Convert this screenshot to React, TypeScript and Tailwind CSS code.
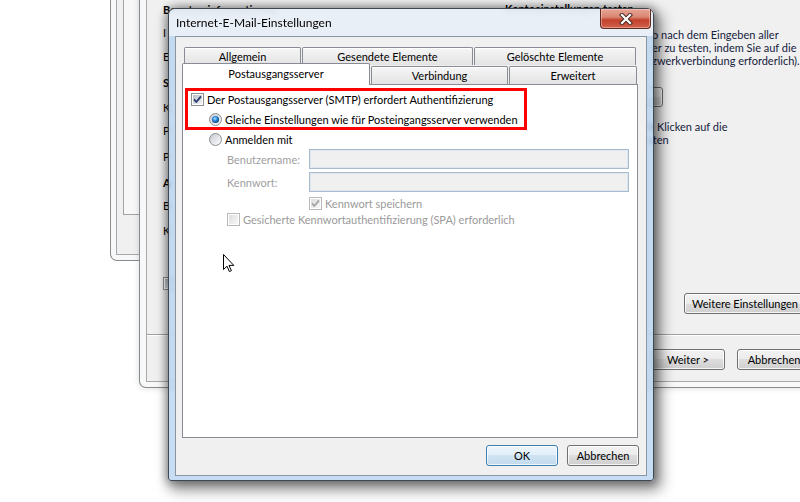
import React from "react";

type BtnProps = { children?: React.ReactNode; className?: string; primary?: boolean };

function Btn({ children, className = "", primary = false }: BtnProps) {
  const skin = primary
    ? "border-[#3c7fb1] bg-[linear-gradient(#edf5fb_0%,#e1eef8_50%,#cfe3f2_50%,#c3dbee_100%)] shadow-[inset_0_0_0_1px_rgba(255,255,255,0.7)]"
    : "border-[#707070] bg-[linear-gradient(#f2f2f2_0%,#ebebeb_50%,#dddddd_50%,#cfcfcf_100%)] shadow-[inset_0_0_0_1px_rgba(255,255,255,0.8)]";
  return (
    <div className={`flex shrink-0 items-center justify-center overflow-hidden whitespace-nowrap rounded-[3px] border ${skin} ${className}`}>
      {children}
    </div>
  );
}

function Check({ checked = false, disabled = false }: { checked?: boolean; disabled?: boolean }) {
  return (
    <svg width="13" height="13" viewBox="0 0 13 13" className="shrink-0">
      <defs>
        <linearGradient id="chkOn" x1="0" y1="0" x2="1" y2="1">
          <stop offset="0" stopColor="#b8bec6" />
          <stop offset="1" stopColor="#f2f3f4" />
        </linearGradient>
        <linearGradient id="chkOff" x1="0" y1="0" x2="1" y2="1">
          <stop offset="0" stopColor="#dcdcdc" />
          <stop offset="1" stopColor="#f7f7f7" />
        </linearGradient>
      </defs>
      <rect x="0.5" y="0.5" width="12" height="12" fill="#fff" stroke={disabled ? "#b9b9b9" : "#8e8f8f"} />
      <rect x="2" y="2" width="9" height="9" fill={disabled ? "url(#chkOff)" : "url(#chkOn)"} />
      {checked && (
        <path
          d="M3 6.3 L5.3 9 L10 3.3"
          fill="none"
          stroke={disabled ? "#a6a6a6" : "#2c3d72"}
          strokeWidth="1.9"
          strokeLinejoin="round"
        />
      )}
    </svg>
  );
}

function Radio({ checked = false }: { checked?: boolean }) {
  return (
    <svg width="13" height="13" viewBox="0 0 13 13" className="shrink-0">
      <defs>
        <linearGradient id="radBg" x1="0" y1="0" x2="1" y2="1">
          <stop offset="0" stopColor="#c4c9cf" />
          <stop offset="1" stopColor="#ffffff" />
        </linearGradient>
        <radialGradient id="radDot" cx="0.42" cy="0.38" r="0.65">
          <stop offset="0" stopColor="#b5e2ff" />
          <stop offset="0.45" stopColor="#2d8ee0" />
          <stop offset="1" stopColor="#0c3a70" />
        </radialGradient>
      </defs>
      <circle cx="6.5" cy="6.5" r="6" fill="url(#radBg)" stroke="#8e8f8f" />
      {checked && <circle cx="6.5" cy="6.5" r="3.6" fill="url(#radDot)" />}
    </svg>
  );
}

function Field() {
  return (
    <div className="h-[20px] w-[320px] shrink-0 border border-[#a9bbd0] bg-[#f0f0f0] shadow-[inset_0_0_0_1px_#dfe6ee]" />
  );
}

function OldWindow() {
  return (
    <div className="absolute left-[110px] top-[-30px] flex h-[291px] w-[90px] flex-col rounded-b-[7px] border border-t-0 border-[#8a8a8a] bg-[#f6f8fa] px-[5px] pb-[5px]">
      <div className="flex-1 border border-t-0 border-[#a9a9a9] bg-[#f0f0f0] pl-[6px]">
        <div className="h-[245px] border border-t-0 border-[#a3a3a3] bg-[#f7f7f7]" />
      </div>
    </div>
  );
}

// the dialog hides these labels, only their first letter peeks out
const accountLabels = [
  { text: "I", mt: "mt-[11px]" },
  { text: "E", mt: "mt-[10px]" },
  { text: "S", bold: true, mt: "mt-[12px]" },
  { text: "K", mt: "mt-[11px]" },
  { text: "P", mt: "mt-[9px]" },
  { text: "P", mt: "mt-[12px]" },
  { text: "A", bold: true, mt: "mt-[12px]" },
  { text: "B", mt: "mt-[9px]" },
  { text: "K", mt: "mt-[11px]" },
];

function AccountWindow() {
  return (
    <div className="absolute left-[139px] top-[-40px] flex h-[428px] w-[720px] flex-col rounded-b-[7px] border border-t-0 border-[#8a8a8a] bg-[#f6f8fa] px-[6px] pb-[5px] shadow-[0_0_6px_rgba(0,0,0,0.15)]">
      <div className="flex flex-1 flex-col border border-t-0 border-[#a9a9a9] bg-[#f0f0f0]">
        <div className="flex h-[374px]">
          <div className="flex w-[358px] shrink-0 flex-col pl-[16px] pt-[44px]">
            <div className="h-[11px] whitespace-nowrap font-bold leading-[11px]">Benutzerinformationen</div>
            {accountLabels.map((l, i) => (
              <div key={i} className={`h-[14px] leading-[14px] ${l.mt} ${l.bold ? "font-bold" : ""}`}>
                {l.text}
              </div>
            ))}
            <div className="mt-[39px] flex">
              <Check />
            </div>
          </div>
          <div className="flex flex-1 flex-col pt-[43px]">
            <div className="h-[11px] whitespace-nowrap font-bold leading-[11px]">Kontoeinstellungen testen</div>
            <div className="ml-[147px] mt-[14px] whitespace-nowrap leading-[13px] text-[#14213d]">
              <div>o nach dem Eingeben aller</div>
              <div>er zu testen, indem Sie auf die</div>
              <div>zwerkverbindung erforderlich).</div>
            </div>
            <Btn className="mt-[20px] h-[20px] w-[158px]" />
            <div className="ml-[143px] mt-[13px] whitespace-nowrap leading-[13px] text-[#14213d]">
              <div>h Klicken auf die</div>
              <div>sten</div>
            </div>
            <Btn className="mb-[20px] ml-[179px] mt-auto h-[21px] w-[132px] !justify-start pl-[7px]">
              Weitere Einstellungen
            </Btn>
          </div>
        </div>
        <div className="border-t border-b border-t-[#a0a0a0] border-b-white" />
        <div className="flex flex-1 gap-[8px] pl-[422px] pt-[13px]">
          <Btn className="h-[21px] w-[74px]" />
          <Btn className="h-[21px] w-[74px]">Weiter &gt;</Btn>
          <Btn className="ml-[4px] h-[21px] w-[74px]">Abbrechen</Btn>
        </div>
      </div>
    </div>
  );
}

function CloseButton() {
  return (
    <div className="-mt-[1px] mr-[2px] flex h-[20px] w-[51px] items-center justify-center self-start rounded-b-[4px] border border-t-0 border-[#5e2a22] bg-[linear-gradient(#e6a595_0%,#d98773_42%,#c2412c_58%,#d0614c_100%)] shadow-[inset_0_0_0_1px_rgba(255,220,210,0.45)]">
      <svg width="14" height="12" viewBox="0 0 14 12">
        <path d="M3 2 L11 10 M11 2 L3 10" stroke="#4a2a26" strokeWidth="4.2" strokeLinecap="square" />
        <path d="M3 2 L11 10 M11 2 L3 10" stroke="#ffffff" strokeWidth="2.2" strokeLinecap="square" />
      </svg>
    </div>
  );
}

function Tab({ label, className = "", active = false }: { label: string; className?: string; active?: boolean }) {
  return (
    <div
      className={`flex shrink-0 items-center justify-center rounded-t-[2px] border border-b-0 border-[#898c95] ${
        active
          ? "relative z-10 -mb-[1px] h-[22px] bg-white pb-[2px]"
          : "h-[18px] bg-[linear-gradient(#f6f6f6,#e3e3e3)] shadow-[inset_0_1px_0_#ffffff]"
      } ${className}`}
    >
      {label}
    </div>
  );
}

function MailSettingsDialog() {
  return (
    <div className="absolute left-[168px] top-[8px] flex h-[473px] w-[486px] flex-col rounded-t-[7px] rounded-b-[3px] border border-[#3f4852] bg-[#b4d1ef]/75 px-[6px] pb-[4px] shadow-[0_0_8px_2px_rgba(0,0,0,0.3),4px_6px_14px_3px_rgba(0,0,0,0.45)] backdrop-blur-[2px]">
      <div className="-mx-[6px] flex h-[27px] items-center rounded-t-[6px] bg-[#f1f4f7]/80 pl-[7px] pt-[1px] text-[12px]">
        <span className="flex-1">Internet-E-Mail-Einstellungen</span>
        <CloseButton />
      </div>
      <div className="flex flex-1 flex-col border border-[#8a95a3] bg-[#f0f0f0]">
        <div className="mt-[10px] flex h-[18px] gap-[1px] pl-[8px]">
          <Tab label="Allgemein" className="w-[117px]" />
          <Tab label="Gesendete Elemente" className="w-[171px]" />
          <Tab label="Gelöschte Elemente" className="w-[162px]" />
        </div>
        <div className="-mt-[2px] flex h-[21px] items-end gap-[1px] pl-[6px]">
          <Tab label="Postausgangsserver" active className="w-[188px]" />
          <Tab label="Verbindung" className="w-[137px]" />
          <Tab label="Erweitert" className="w-[128px]" />
        </div>
        <div className="relative ml-[6px] flex h-[354px] w-[456px] flex-col border border-[#898c95] bg-white">
          <div className="ml-[8px] mt-[8px] flex h-[13px] items-center gap-[3px]">
            <Check checked />
            <span>Der Postausgangsserver (SMTP) erfordert Authentifizierung</span>
          </div>
          <div className="ml-[26px] mt-[7px] flex h-[13px] items-center gap-[3px]">
            <Radio checked />
            <span>Gleiche Einstellungen wie für Posteingangsserver verwenden</span>
          </div>
          <div className="ml-[26px] mt-[7px] flex h-[13px] items-center gap-[3px]">
            <Radio />
            <span>Anmelden mit</span>
          </div>
          <div className="ml-[44px] mt-[3px] flex items-center text-[#a0a0a0]">
            <span className="w-[82px] shrink-0">Benutzername:</span>
            <Field />
          </div>
          <div className="ml-[44px] mt-[3px] flex items-center text-[#a0a0a0]">
            <span className="w-[82px] shrink-0">Kennwort:</span>
            <Field />
          </div>
          <div className="ml-[126px] mt-[5px] flex h-[13px] items-center gap-[3px] text-[#9a9a9a]">
            <Check checked disabled />
            <span>Kennwort speichern</span>
          </div>
          <div className="ml-[44px] mt-[3px] flex h-[13px] items-center gap-[3px] text-[#9a9a9a]">
            <Check disabled />
            <span>Gesicherte Kennwortauthentifizierung (SPA) erforderlich</span>
          </div>
          <div className="absolute left-[2px] top-[3px] h-[42px] w-[342px] border-[3px] border-[#ff0000]" />
        </div>
        <div className="mt-[7px] flex justify-end gap-[9px] pr-[7px]">
          <Btn primary className="h-[21px] w-[72px]">OK</Btn>
          <Btn className="h-[21px] w-[72px]">Abbrechen</Btn>
        </div>
      </div>
    </div>
  );
}

function Cursor() {
  return (
    <svg width="13" height="20" viewBox="0 0 13 20" className="absolute left-[222px] top-[253px]">
      <path
        d="M1.5 1.5 L1.5 16.5 L5 13.2 L7.4 18.6 L9.4 17.7 L7 12.4 L11.8 12.4 Z"
        fill="#ffffff"
        stroke="#000000"
        strokeWidth="1"
      />
    </svg>
  );
}

export default function App() {
  return (
    <div className="relative h-[502px] w-[800px] overflow-hidden bg-white text-[11px] leading-none text-black [font-family:Lato,'Liberation_Sans',sans-serif]">
      <OldWindow />
      <AccountWindow />
      <MailSettingsDialog />
      <Cursor />
    </div>
  );
}
